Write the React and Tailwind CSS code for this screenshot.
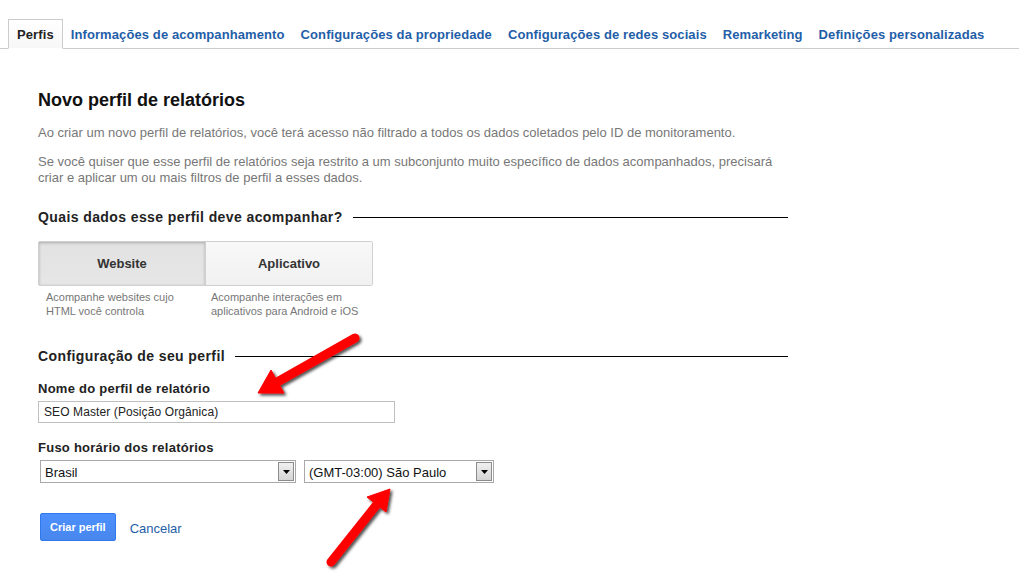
import React, { useState } from "react";

const tabs = [
  "Perfis",
  "Informações de acompanhamento",
  "Configurações da propriedade",
  "Configurações de redes sociais",
  "Remarketing",
  "Definições personalizadas",
];

function SectionTitle({ children }) {
  return (
    <div className="flex items-center gap-[10px]">
      <h3 className="text-[14px] font-bold tracking-[0.4px] text-[#222] whitespace-nowrap leading-[18px]">{children}</h3>
      <div className="flex-1 h-px bg-black" />
    </div>
  );
}

function Select({ value, width }) {
  return (
    <div
      className="flex items-center h-[23px] border border-[#a9a9a9] bg-white"
      style={{ width }}
    >
      <span className="flex-1 pl-[4px] pt-[1px] text-[13px] text-[#111] leading-none">{value}</span>
      <span className="flex items-center justify-center w-[16px] h-[19px] mr-[1px] border border-[#8c8c8c] bg-gradient-to-b from-[#f0f0f0] to-[#d4d4d4]">
        <svg width="7" height="4" viewBox="0 0 7 4">
          <path d="M0 0h7L3.5 4z" fill="#000" />
        </svg>
      </span>
    </div>
  );
}

export default function App() {
  const [active, setActive] = useState("website");

  return (
    <div className="relative w-[1019px] h-[588px] bg-white font-['Liberation_Sans',Arial,sans-serif] overflow-hidden">
      {/* tabs */}
      <nav className="flex items-end pt-[19px] pl-[8px] border-b border-[#cccccc]">
        {tabs.map((t, i) =>
          i === 0 ? (
            <div
              key={t}
              className="h-[30px] -mb-px px-[8px] pt-[2px] flex items-center border border-[#cccccc] border-b-white bg-gradient-to-b from-white to-[#f7f7f7] text-[13px] font-bold tracking-[0.1px] text-[#222]"
            >
              {t}
            </div>
          ) : (
            <div key={t} className="h-[29px] px-[8px] pt-[2px] flex items-center text-[13px] font-bold tracking-[0.1px] text-[#1f5ea8]">
              {t}
            </div>
          )
        )}
      </nav>

      <main className="w-[750px] ml-[38px]">
        <h1 className="mt-[40px] text-[18px] font-bold text-[#111] leading-[22px]">Novo perfil de relatórios</h1>
        <p className="mt-[14px] text-[13px] text-[#777] leading-[16px]">
          Ao criar um novo perfil de relatórios, você terá acesso não filtrado a todos os dados coletados pelo ID de monitoramento.
        </p>
        <p className="mt-[13px] text-[13px] text-[#777] leading-[16px] pr-[10px]">
          Se você quiser que esse perfil de relatórios seja restrito a um subconjunto muito específico de dados acompanhados, precisará criar e aplicar um ou mais filtros de perfil a esses dados.
        </p>

        <div className="mt-[22px]">
          <SectionTitle>Quais dados esse perfil deve acompanhar?</SectionTitle>
        </div>

        <div className="mt-[15px] flex w-[335px] h-[45px] border border-[#d0d0d0] rounded-[2px]">
          <button
            onClick={() => setActive("website")}
            className={
              "flex-1 text-[13px] font-bold text-[#333] border-r border-[#d0d0d0] " +
              (active === "website"
                ? "bg-gradient-to-b from-[#e2e2e2] to-[#e6e6e6] shadow-[inset_0_1px_3px_rgba(0,0,0,0.25)]"
                : "bg-gradient-to-b from-[#f8f8f8] to-[#f1f1f1]")
            }
          >
            Website
          </button>
          <button
            onClick={() => setActive("app")}
            className={
              "flex-1 text-[13px] font-bold text-[#333] " +
              (active === "app"
                ? "bg-gradient-to-b from-[#e2e2e2] to-[#e6e6e6] shadow-[inset_0_1px_3px_rgba(0,0,0,0.25)]"
                : "bg-gradient-to-b from-[#f8f8f8] to-[#f1f1f1]")
            }
          >
            Aplicativo
          </button>
        </div>
        <div className="flex mt-[4px] text-[11px] text-[#777] leading-[14px]">
          <div className="w-[165px] pl-[8px]">Acompanhe websites cujo HTML você controla</div>
          <div className="w-[160px] pl-[8px]">Acompanhe interações em aplicativos para Android e iOS</div>
        </div>

        <div className="mt-[29px]">
          <SectionTitle>Configuração de seu perfil</SectionTitle>
        </div>

        <label className="block mt-[16px] text-[13px] font-bold tracking-[0.25px] text-[#222] leading-[16px]">Nome do perfil de relatório</label>
        <input
          defaultValue="SEO Master (Posição Orgânica)"
          className="mt-[4px] block w-[357px] h-[22px] border border-[#c0c0c0] px-[5px] text-[12px] tracking-[0.1px] text-[#222] outline-none"
        />

        <label className="block mt-[17px] text-[13px] font-bold tracking-[0.25px] text-[#222] leading-[16px]">Fuso horário dos relatórios</label>
        <div className="mt-[4px] ml-[2px] flex gap-[8px]">
          <Select value="Brasil" width={256} />
          <Select value="(GMT-03:00) São Paulo" width={190} />
        </div>

        <div className="mt-[30px] ml-[2px] flex items-center gap-[14px]">
          <button className="h-[28px] px-[9px] rounded-[2px] border border-[#3079ed] bg-gradient-to-b from-[#4d90fe] to-[#4787ed] text-white text-[11px] font-bold">
            Criar perfil
          </button>
          <a className="text-[13px] text-[#1f5ea8] mt-[4px]">Cancelar</a>
        </div>
      </main>

      {/* annotation arrows */}
      <svg className="absolute inset-0 pointer-events-none" width="1019" height="588">
        <defs>
          <filter id="sh" x="-20%" y="-20%" width="140%" height="140%">
            <feDropShadow dx="2" dy="2" stdDeviation="1.6" floodColor="#000" floodOpacity="0.7" />
          </filter>
        </defs>
        <g filter="url(#sh)" fill="#ff0000" stroke="#ff0000">
          <line x1="355" y1="338" x2="279" y2="381" strokeWidth="9" strokeLinecap="round" />
          <polygon points="258,393 284,393 271,370" strokeWidth="1" strokeLinejoin="round" />
          <line x1="331" y1="562" x2="378" y2="503" strokeWidth="9" strokeLinecap="round" />
          <polygon points="390,489 386,512 367,497" strokeWidth="1" strokeLinejoin="round" />
        </g>
      </svg>
    </div>
  );
}
